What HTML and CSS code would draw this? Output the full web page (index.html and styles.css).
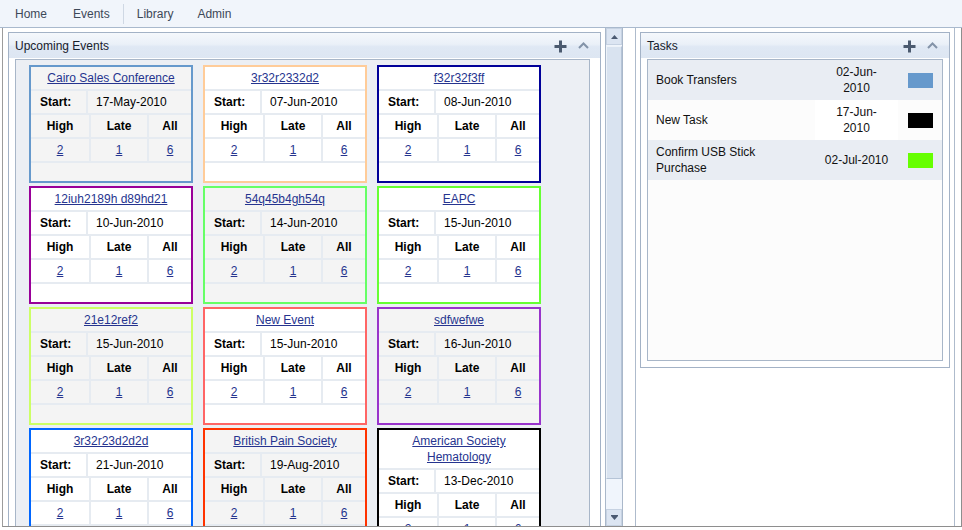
FILE: index.html
```html
<!DOCTYPE html>
<html>
<head>
<meta charset="utf-8">
<title>Dashboard</title>
<link rel="stylesheet" href="styles.css">
</head>
<body>
<nav class="topnav">
  <span class="nav-item">Home</span>
  <span class="nav-item">Events</span>
  <span class="nav-sep"></span>
  <span class="nav-item">Library</span>
  <span class="nav-item">Admin</span>
</nav>
<div class="main">
  <div class="left-col">
    <div class="left-scroll">
      <section class="panel events-panel">
        <header class="panel-head">
          <span class="panel-title">Upcoming Events</span>
          <span class="head-icons">
            <svg class="ic-plus" width="13" height="13" viewBox="0 0 13 13"><path d="M6.5 0.5v12M0.5 6.5h12" stroke="#4b5a6f" stroke-width="3" fill="none"/></svg>
            <svg class="ic-caret" width="11" height="7" viewBox="0 0 11 7"><polyline points="1,6 5.5,1.5 10,6" stroke="#8393a8" stroke-width="2" fill="none"/></svg>
          </span>
        </header>
        <div class="panel-body">
          <div class="events-box">
            <div class="card alt b1">
              <div class="card-title"><a href="#">Cairo Sales Conference</a></div>
              <div class="row"><span class="lbl">Start:</span><span class="date">17-May-2010</span></div>
              <div class="row"><span class="stat s1">High</span><span class="stat s2">Late</span><span class="stat s3">All</span></div>
              <div class="row"><span class="num s1"><a href="#">2</a></span><span class="num s2"><a href="#">1</a></span><span class="num s3"><a href="#">6</a></span></div>
            </div>
            <div class="card b2">
              <div class="card-title"><a href="#">3r32r2332d2</a></div>
              <div class="row"><span class="lbl">Start:</span><span class="date">07-Jun-2010</span></div>
              <div class="row"><span class="stat s1">High</span><span class="stat s2">Late</span><span class="stat s3">All</span></div>
              <div class="row"><span class="num s1"><a href="#">2</a></span><span class="num s2"><a href="#">1</a></span><span class="num s3"><a href="#">6</a></span></div>
            </div>
            <div class="card b3">
              <div class="card-title"><a href="#">f32r32f3ff</a></div>
              <div class="row"><span class="lbl">Start:</span><span class="date">08-Jun-2010</span></div>
              <div class="row"><span class="stat s1">High</span><span class="stat s2">Late</span><span class="stat s3">All</span></div>
              <div class="row"><span class="num s1"><a href="#">2</a></span><span class="num s2"><a href="#">1</a></span><span class="num s3"><a href="#">6</a></span></div>
            </div>
            <div class="card b4">
              <div class="card-title"><a href="#">12iuh2189h d89hd21</a></div>
              <div class="row"><span class="lbl">Start:</span><span class="date">10-Jun-2010</span></div>
              <div class="row"><span class="stat s1">High</span><span class="stat s2">Late</span><span class="stat s3">All</span></div>
              <div class="row"><span class="num s1"><a href="#">2</a></span><span class="num s2"><a href="#">1</a></span><span class="num s3"><a href="#">6</a></span></div>
            </div>
            <div class="card alt b5">
              <div class="card-title"><a href="#">54q45b4gh54q</a></div>
              <div class="row"><span class="lbl">Start:</span><span class="date">14-Jun-2010</span></div>
              <div class="row"><span class="stat s1">High</span><span class="stat s2">Late</span><span class="stat s3">All</span></div>
              <div class="row"><span class="num s1"><a href="#">2</a></span><span class="num s2"><a href="#">1</a></span><span class="num s3"><a href="#">6</a></span></div>
            </div>
            <div class="card b6">
              <div class="card-title"><a href="#">EAPC</a></div>
              <div class="row"><span class="lbl">Start:</span><span class="date">15-Jun-2010</span></div>
              <div class="row"><span class="stat s1">High</span><span class="stat s2">Late</span><span class="stat s3">All</span></div>
              <div class="row"><span class="num s1"><a href="#">2</a></span><span class="num s2"><a href="#">1</a></span><span class="num s3"><a href="#">6</a></span></div>
            </div>
            <div class="card alt b7">
              <div class="card-title"><a href="#">21e12ref2</a></div>
              <div class="row"><span class="lbl">Start:</span><span class="date">15-Jun-2010</span></div>
              <div class="row"><span class="stat s1">High</span><span class="stat s2">Late</span><span class="stat s3">All</span></div>
              <div class="row"><span class="num s1"><a href="#">2</a></span><span class="num s2"><a href="#">1</a></span><span class="num s3"><a href="#">6</a></span></div>
            </div>
            <div class="card b8">
              <div class="card-title"><a href="#">New Event</a></div>
              <div class="row"><span class="lbl">Start:</span><span class="date">15-Jun-2010</span></div>
              <div class="row"><span class="stat s1">High</span><span class="stat s2">Late</span><span class="stat s3">All</span></div>
              <div class="row"><span class="num s1"><a href="#">2</a></span><span class="num s2"><a href="#">1</a></span><span class="num s3"><a href="#">6</a></span></div>
            </div>
            <div class="card alt b9">
              <div class="card-title"><a href="#">sdfwefwe</a></div>
              <div class="row"><span class="lbl">Start:</span><span class="date">16-Jun-2010</span></div>
              <div class="row"><span class="stat s1">High</span><span class="stat s2">Late</span><span class="stat s3">All</span></div>
              <div class="row"><span class="num s1"><a href="#">2</a></span><span class="num s2"><a href="#">1</a></span><span class="num s3"><a href="#">6</a></span></div>
            </div>
            <div class="card b10">
              <div class="card-title"><a href="#">3r32r23d2d2d</a></div>
              <div class="row"><span class="lbl">Start:</span><span class="date">21-Jun-2010</span></div>
              <div class="row"><span class="stat s1">High</span><span class="stat s2">Late</span><span class="stat s3">All</span></div>
              <div class="row"><span class="num s1"><a href="#">2</a></span><span class="num s2"><a href="#">1</a></span><span class="num s3"><a href="#">6</a></span></div>
            </div>
            <div class="card alt b11">
              <div class="card-title"><a href="#">British Pain Society</a></div>
              <div class="row"><span class="lbl">Start:</span><span class="date">19-Aug-2010</span></div>
              <div class="row"><span class="stat s1">High</span><span class="stat s2">Late</span><span class="stat s3">All</span></div>
              <div class="row"><span class="num s1"><a href="#">2</a></span><span class="num s2"><a href="#">1</a></span><span class="num s3"><a href="#">6</a></span></div>
            </div>
            <div class="card b12">
              <div class="card-title"><a href="#">American Society Hematology</a></div>
              <div class="row"><span class="lbl">Start:</span><span class="date">13-Dec-2010</span></div>
              <div class="row"><span class="stat s1">High</span><span class="stat s2">Late</span><span class="stat s3">All</span></div>
              <div class="row"><span class="num s1"><a href="#">2</a></span><span class="num s2"><a href="#">1</a></span><span class="num s3"><a href="#">6</a></span></div>
            </div>
          </div>
        </div>
      </section>
    </div>
    <div class="vscroll">
      <div class="sb-btn"><svg width="7" height="4" viewBox="0 0 7 4"><polygon points="0,4 3.5,0 7,4" fill="#4b5a72"/></svg></div>
      <div class="sb-thumb"></div>
      <div class="sb-track"></div>
      <div class="sb-btn"><svg width="7" height="5" viewBox="0 0 7 5"><rect x="0" y="0" width="7" height="1" fill="#4b5a72"/><polygon points="0,1 7,1 3.5,5" fill="#4b5a72"/></svg></div>
    </div>
  </div>
  <div class="right-col">
    <section class="panel tasks-panel">
      <header class="panel-head">
        <span class="panel-title">Tasks</span>
        <span class="head-icons">
          <svg class="ic-plus" width="13" height="13" viewBox="0 0 13 13"><path d="M6.5 0.5v12M0.5 6.5h12" stroke="#4b5a6f" stroke-width="3" fill="none"/></svg>
          <svg class="ic-caret" width="11" height="7" viewBox="0 0 11 7"><polyline points="1,6 5.5,1.5 10,6" stroke="#8393a8" stroke-width="2" fill="none"/></svg>
        </span>
      </header>
      <div class="panel-body">
        <div class="task-box">
          <div class="task-row alt">
            <div class="t-name">Book Transfers</div>
            <div class="t-date"><span>02-Jun-2010</span></div>
            <div class="t-color"><span class="swatch sw-blue"></span></div>
          </div>
          <div class="task-row plain">
            <div class="t-name">New Task</div>
            <div class="t-date"><span>17-Jun-2010</span></div>
            <div class="t-color"><span class="swatch sw-black"></span></div>
          </div>
          <div class="task-row alt">
            <div class="t-name">Confirm USB Stick Purchase</div>
            <div class="t-date"><span>02-Jul-2010</span></div>
            <div class="t-color"><span class="swatch sw-green"></span></div>
          </div>
        </div>
      </div>
    </section>
  </div>
</div>
</body>
</html>
```

FILE: styles.css
```css
* { box-sizing: border-box; }
html, body { margin: 0; padding: 0; }
body {
  font-family: "Liberation Sans", Arial, sans-serif;
  font-size: 12px;
  color: #000;
  background: #fff;
  width: 962px;
  height: 530px;
  overflow: hidden;
}
a { color: #26348f; text-decoration: underline; }

/* top navigation */
.topnav {
  height: 28px;
  background: #f1f5fb;
  border-bottom: 1px solid #a9b9cd;
  display: flex;
  align-items: center;
  padding-left: 2px;
}
.nav-item { padding: 0 13px; color: #3d4858; line-height: 16px; }
.nav-item:last-child { padding-left: 11px; }
.nav-sep { width: 1px; height: 20px; background: #cfd8e4; }

/* main frame */
.main {
  margin-left: 2px;
  width: 960px;
  height: 499px;
  border-left: 1px solid #9c9c9c;
  border-right: 1px solid #8e8e8e;
  border-bottom: 1px solid #8e8e8e;
  display: flex;
}
.left-col { width: 620px; display: flex; }
.left-scroll { width: 602px; height: 498px; overflow: hidden; padding: 4px 0 0 5px; }
.right-col {
  width: 320px;
  margin-left: 12px;
  border-left: 1px solid #aebbcc;
  border-right: 1px solid #aebbcc;
  padding: 4px;
}

/* panels */
.panel { border: 1px solid #a3b2c6; background: #fff; }
.events-panel { width: 593px; }
.tasks-panel { width: 310px; }
.panel-head {
  height: 25px;
  display: flex;
  align-items: center;
  padding: 0 11px 0 6px;
  background: linear-gradient(#f5f8fc 0%, #eaf0f8 45%, #dfe8f4 55%, #dde6f2 100%);
  color: #17202c;
}
.panel-title { flex: 1; }
.head-icons { display: flex; align-items: center; gap: 11px; }
.ic-plus { display: block; margin-top: 1px; }
.ic-caret { display: block; margin-top: -1px; }
.panel-body { padding: 1px 10px 6px 6px; }
.tasks-panel .panel-body { padding: 1px 6px 6px 6px; }

/* events grid */
.events-box {
  border: 1px solid #a8b6c8;
  background: #eceff4;
  padding: 5px 0 20px 13px;
  display: grid;
  grid-template-columns: repeat(3, 164px);
  column-gap: 10px;
  row-gap: 3px;
  align-items: start;
}
.card { border: 2px solid #000; background: #fff; padding-bottom: 18px; }
.card.alt { background: #f4f4f4; }
.b1 { border-color: #6699cc; }
.b2 { border-color: #ffcc99; }
.b3 { border-color: #000099; }
.b4 { border-color: #990099; }
.b5 { border-color: #66ff66; }
.b6 { border-color: #66ff33; }
.b7 { border-color: #ccff66; }
.b8 { border-color: #ff6666; }
.b9 { border-color: #9933cc; }
.b10 { border-color: #0066ff; }
.b11 { border-color: #ff3300; }
.b12 { border-color: #000000; }

.card-title {
  padding: 3px 6px 3px;
  line-height: 16px;
  text-align: center;
  border-bottom: 2px solid #e6ebf1;
}
.row {
  display: flex;
  height: 24px;
  line-height: 22px;
  border-bottom: 2px solid #e6ebf1;
}
.lbl { width: 55px; padding-left: 9px; font-weight: bold; }
.date { flex: 1; padding-left: 8px; border-left: 2px solid #e6ebf1; }
.stat, .num { text-align: center; }
.stat { font-weight: bold; }
.s1 { width: 58px; }
.s2 { width: 58px; border-left: 2px solid #e6ebf1; }
.s3 { flex: 1; border-left: 2px solid #e6ebf1; }

/* fake scrollbar */
.vscroll {
  width: 18px;
  height: 498px;
  border-left: 1px solid #aab8ca;
  border-right: 1px solid #aab8ca;
  background: #f0f5fc;
  display: flex;
  flex-direction: column;
}
.sb-btn {
  height: 17px;
  background: #dce5f2;
  border: 1px solid #c6d2e2;
  display: flex;
  align-items: center;
  justify-content: center;
}
.sb-btn svg { display: block; }
.sb-thumb {
  height: 433px;
  margin-top: 1px;
  background: #d9e3f0;
  border: 1px solid #b5c4d7;
  border-left-color: #eef3f9;
  border-top-color: #eef3f9;
}
.sb-track { flex: 1; }

/* tasks */
.task-box {
  border: 1px solid #a8b6c8;
  background: #fcfcfc;
  height: 302px;
}
.task-row { display: flex; height: 40px; line-height: 16px; color: #111; }
.task-row.alt { background: #e9edf3; }
.t-name {
  width: 167px;
  padding: 0 10px 0 8px;
  display: flex;
  align-items: center;
}
.t-date {
  width: 83px;
  padding: 0 9px;
  display: flex;
  align-items: center;
  justify-content: center;
  text-align: center;
}
.task-row.plain .t-date { background: #fff; }
.t-color { flex: 1; display: flex; align-items: center; padding-left: 10px; }
.swatch { display: block; width: 25px; height: 15px; }
.sw-blue { background: #6699cc; }
.sw-black { background: #000; }
.sw-green { background: #66ff00; }
```
